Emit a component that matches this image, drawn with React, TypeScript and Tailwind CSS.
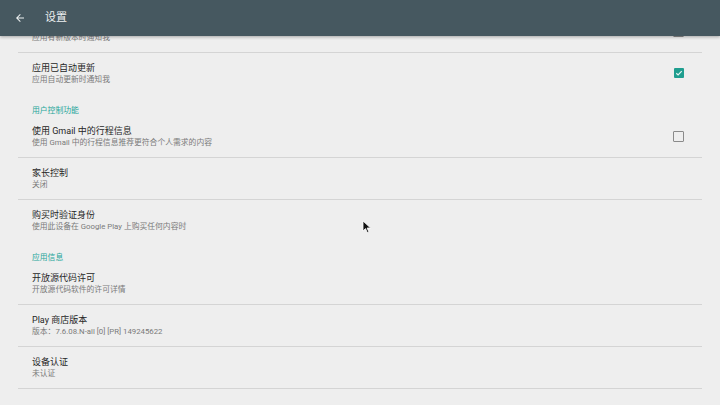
import React from 'react';

type Row = {
  title: string;
  summary: string;
  checkbox?: 'on' | 'off';
  divider?: boolean;
};

type Section = {
  header?: string;
  rows: Row[];
};

// first row is scrolled up under the toolbar, only its summary shows
const sections: Section[] = [
  {
    rows: [
      { title: '', summary: '应用有新版本时通知我', checkbox: 'off', divider: true },
      { title: '应用已自动更新', summary: '应用自动更新时通知我', checkbox: 'on' },
    ],
  },
  {
    header: '用户控制功能',
    rows: [
      { title: '使用 Gmail 中的行程信息', summary: '使用 Gmail 中的行程信息推荐更符合个人需求的内容', checkbox: 'off', divider: true },
      { title: '家长控制', summary: '关闭', divider: true },
      { title: '购买时验证身份', summary: '使用此设备在 Google Play 上购买任何内容时' },
    ],
  },
  {
    header: '应用信息',
    rows: [
      { title: '开放源代码许可', summary: '开放源代码软件的许可详情', divider: true },
      { title: 'Play 商店版本', summary: '版本：7.6.08.N-all [0] [PR] 149245622', divider: true },
      { title: '设备认证', summary: '未认证', divider: true },
    ],
  },
];

function Checkbox({ checked }: { checked: boolean }) {
  if (checked) {
    return (
      <div className="w-[10px] h-[10px] rounded-[1px] bg-[#1f9e8f] flex items-center justify-center">
        <svg width="8" height="8" viewBox="0 0 8 8">
          <path d="M1.3 4.2 L3.1 5.9 L6.7 2.2" fill="none" stroke="#e8f5f3" strokeWidth="1.2" />
        </svg>
      </div>
    );
  }
  return <div className="w-[11px] h-[11px] rounded-[1px] border-[1.5px] border-[#8a8a8a]" />;
}

function SettingRow({ row }: { row: Row }) {
  return (
    <div
      className={`flex items-start h-[42px] px-[14px] ${
        row.divider ? 'border-b border-[#d4d4d4]' : ''
      }`}
    >
      <div className="flex-1 pt-[9px]">
        <div className="h-[12px] text-[9px] leading-[12px] text-[#262626]">{row.title}</div>
        <div className="text-[7.8px] leading-[12px] text-[#7a7a7a]">{row.summary}</div>
      </div>
      {row.checkbox && (
        <div className="mt-[15px] mr-[4px]">
          <Checkbox checked={row.checkbox === 'on'} />
        </div>
      )}
    </div>
  );
}

export default function App() {
  return (
    <div
      className="w-[720px] h-[405px] overflow-hidden bg-[#eeeeee] flex flex-col"
      style={{ fontFamily: 'Roboto, "Noto Sans CJK SC", sans-serif' }}
    >
      <header className="relative z-10 h-[36px] shrink-0 bg-[#465860] flex items-center shadow-[0_1px_3px_rgba(0,0,0,0.3)]">
        <svg className="ml-[14px]" width="12" height="12" viewBox="0 0 24 24">
          <path d="M20 11H7.83l5.59-5.59L12 4l-8 8 8 8 1.41-1.41L7.83 13H20v-2z" fill="#eef1f2" />
        </svg>
        <h1 className="ml-[19px] text-[11px] text-[#eef1f2]">设置</h1>
      </header>

      <div className="relative flex-1 overflow-hidden">
        <div className="-mt-[25px] mx-[18px]">
          {sections.map((section, i) => (
            <div key={i}>
              {section.header && (
                <div className="h-[21px] px-[14px] pt-[11px] text-[7.8px] leading-[10px] text-[#26a69a]">
                  {section.header}
                </div>
              )}
              {section.rows.map((row) => (
                <SettingRow key={row.summary} row={row} />
              ))}
            </div>
          ))}
        </div>

        {/* mouse pointer */}
        <svg className="absolute left-[362px] top-[184px]" width="10" height="14" viewBox="0 0 10 14">
          <path d="M1 1 L1 11 L3.5 8.6 L5.3 12.6 L6.9 11.9 L5.1 8 L8.6 8 Z" fill="#111" stroke="#fff" strokeWidth="0.8" />
        </svg>
      </div>
    </div>
  );
}
